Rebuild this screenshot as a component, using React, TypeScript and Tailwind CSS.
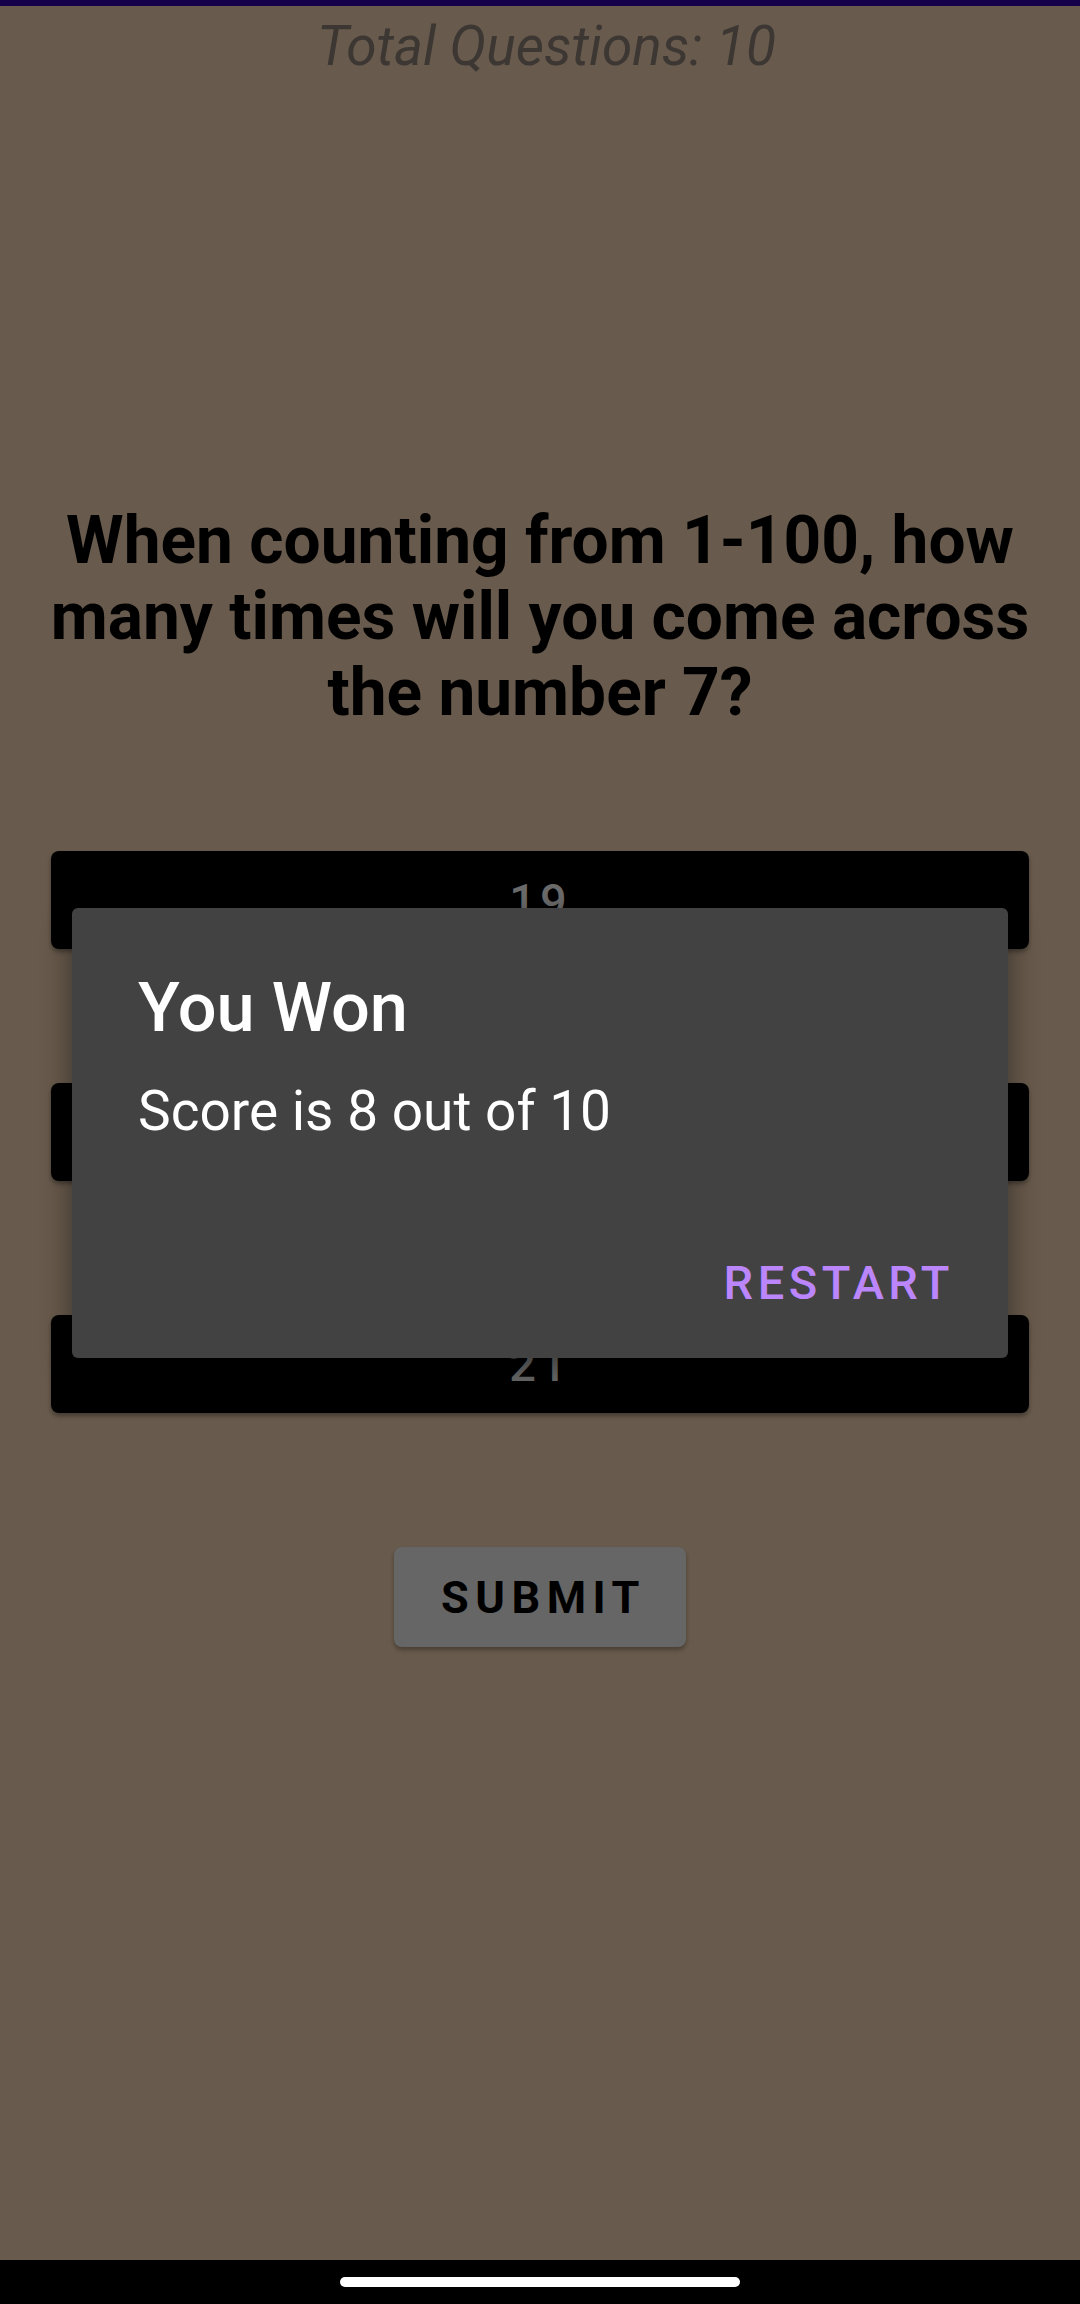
import React from 'react';

// middle answer sits fully under the dialog, so its label isn't drawn
const options = ['19', '', '21'];

const OptionBox = ({label}: {label: string}) => {
  return (
    <div className="mx-[51px] flex h-[98px] items-center justify-center rounded-[8px] bg-black shadow-[0_3px_4px_rgba(0,0,0,0.35)]">
      <span className="text-[47px] font-medium leading-none tracking-[4px] text-[#6b6b6b]">
        {label}
      </span>
    </div>
  );
};

const ResultDialog = () => {
  return (
    <div className="absolute left-[72px] top-[908px] flex h-[450px] w-[936px] flex-col rounded-[6px] bg-[#424242] shadow-[0_10px_30px_rgba(0,0,0,0.45)]">
      <div className="pl-[66px] pt-[60px] text-[68.5px] font-medium leading-[80px] text-white">
        You Won
      </div>
      <div className="mt-[31px] pl-[66px] text-[55px] leading-[64px] text-white">
        Score is 8 out of 10
      </div>
      <div className="mt-auto flex justify-end pb-[48px] pr-[54px]">
        <button className="text-[47px] font-medium uppercase leading-[54px] tracking-[4.5px] text-[#bb86fc]">
          Restart
        </button>
      </div>
    </div>
  );
};

export default function App() {
  return (
    <div
      className="relative flex h-[2304px] w-[1080px] flex-col overflow-hidden bg-[#685a4c]"
      style={{fontFamily: 'Roboto, "Noto Sans", sans-serif'}}>
      <div className="h-[6px] bg-[#15004a]" />

      <div className="mt-[9px] pl-[13px] text-center text-[55px] italic leading-[62px] text-[#3c3733]">
        Total Questions: 10
      </div>

      <div className="mt-[426px] px-[30px] text-center text-[65.8px] font-bold leading-[76px] text-black">
        When counting from 1-100, how many times will you come across the
        number 7?
      </div>

      <div className="mt-[120px] flex flex-col gap-[134px]">
        {options.map((o, i) => (
          <OptionBox key={i} label={o} />
        ))}
      </div>

      <button className="mx-auto mt-[134px] flex h-[100px] w-[292px] items-center justify-center rounded-[8px] bg-[#666666] shadow-[0_3px_4px_rgba(0,0,0,0.3)]">
        <span className="pl-[7px] text-[45px] font-bold uppercase leading-none tracking-[6.5px] text-black">
          Submit
        </span>
      </button>

      <div className="mt-auto flex h-[44px] items-start justify-center bg-black pt-[17px]">
        <div className="h-[10px] w-[400px] rounded-full bg-white" />
      </div>

      <ResultDialog />
    </div>
  );
}
